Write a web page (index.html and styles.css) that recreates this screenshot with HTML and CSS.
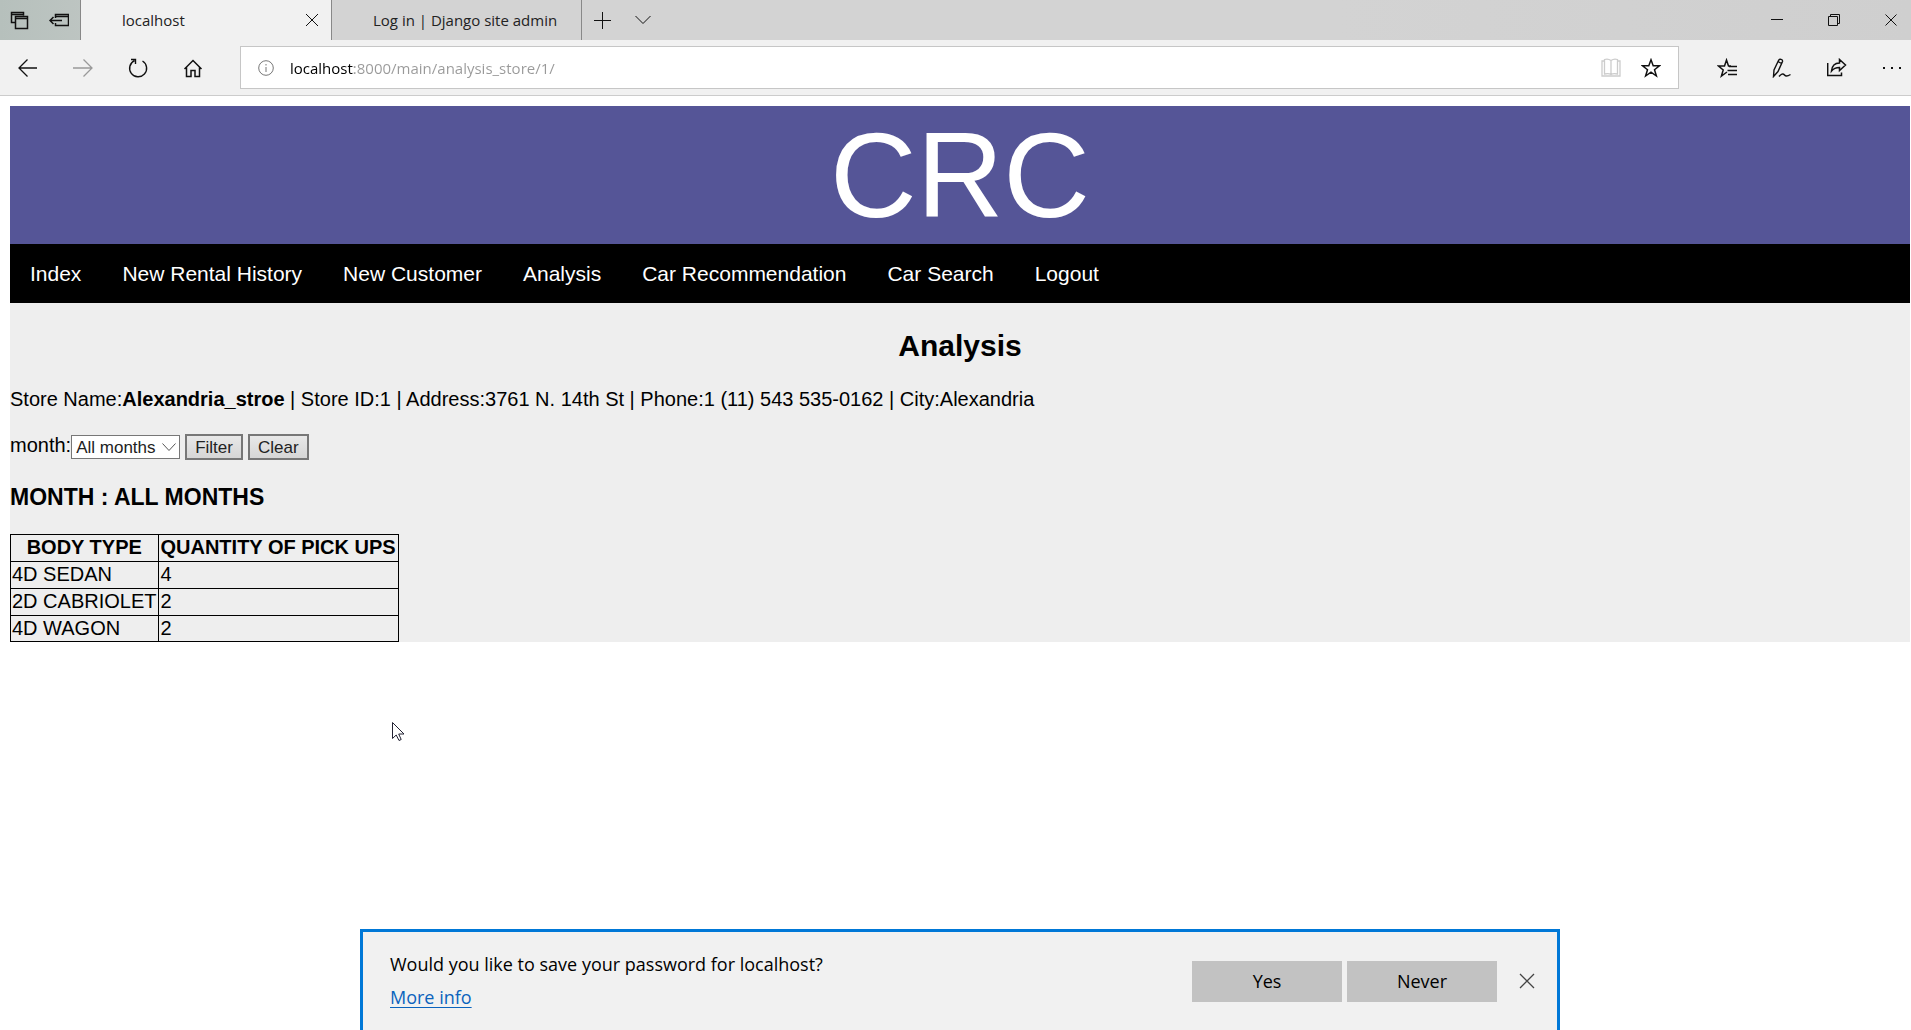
FILE: index.html
```html
<!DOCTYPE html>
<html lang="en">
<head>
<meta charset="utf-8">
<title>localhost</title>
<link rel="stylesheet" href="styles.css">
</head>
<body>
<div class="browser">
  <div class="tabstrip">
    <div class="tab-tools">
      <button class="icon-btn" aria-label="Tabs you've set aside"><svg width="20" height="20" viewBox="0 0 20 20"><path d="M5.500 12.500H2.500V2.500H14.500V5.500M2.500 4.500H14.500M6.500 6.500H18.500V18.500H6.500ZM6.500 8.500H18.500M5 12.500H6" stroke-width="1.500"/></svg></button>
      <button class="icon-btn" aria-label="Set these tabs aside"><svg width="20" height="20" viewBox="0 0 20 20"><path d="M6.500 8V4.500H19.500V15.500H6.500V13M6.500 6.500H19.500M1 10.500H13M4.500 7L1 10.500L4.500 14" stroke-width="1.500"/></svg></button>
    </div>
    <div class="tab tab-active"><span class="tab-title">localhost</span>
      <button class="icon-btn" aria-label="Close tab"><svg width="14" height="14" viewBox="0 0 14 14"><path d="M1 1L13 13M13 1L1 13"/></svg></button>
    </div>
    <div class="tab"><span class="tab-title">Log in | Django site admin</span></div>
    <div class="tab-actions">
      <button class="icon-btn" aria-label="New tab"><svg width="17" height="17" viewBox="0 0 17 17"><path d="M8.500 0V17M0 8.500H17"/></svg></button>
      <button class="icon-btn" aria-label="Tab previews"><svg width="16" height="10" viewBox="0 0 16 10"><path d="M.5 1L8 8.500L15.500 1"/></svg></button>
    </div>
    <div class="window-controls">
      <button class="icon-btn" aria-label="Minimize"><svg width="12" height="12" viewBox="0 0 12 12"><path d="M0 5.500H12"/></svg></button>
      <button class="icon-btn" aria-label="Restore"><svg width="12" height="12" viewBox="0 0 12 12"><path d="M.5 2.500H9.500V11.500H.5ZM2.500 2.500V.5H11.500V9.500H9.500"/></svg></button>
      <button class="icon-btn" aria-label="Close"><svg width="12" height="12" viewBox="0 0 12 12"><path d="M.5 .5L11.500 11.500M11.500 .5L.5 11.500"/></svg></button>
    </div>
  </div>
  <div class="toolbar">
    <div class="tools">
      <button class="icon-btn" aria-label="Back"><svg width="20" height="20" viewBox="0 0 20 20"><path d="M19 10H1M9.500 1.500L1 10L9.500 18.500" stroke-width="1.300"/></svg></button>
      <button class="icon-btn icon-off" aria-label="Forward"><svg width="20" height="20" viewBox="0 0 20 20"><path d="M0 10H18.500M10.500 1.500L19 10L10.500 18.500" stroke-width="1.300"/></svg></button>
      <button class="icon-btn" aria-label="Refresh"><svg width="20" height="20" viewBox="0 0 20 20"><path d="M14.500 3A8.500 8.500 0 1 1 6.500 2.600M3 1.500H7.500V6" stroke-width="1.400"/></svg></button>
      <button class="icon-btn" aria-label="Home"><svg width="20" height="20" viewBox="0 0 20 20"><path d="M1.500 11L10 2.500L18.500 11M3.500 9.500V18.500H8V12.500H12V18.500H16.500V9.500" stroke-width="1.500"/></svg></button>
    </div>
    <div class="address">
      <svg class="icon icon-grey" width="16" height="16" viewBox="0 0 16 16"><circle cx="8" cy="8" r="7.300"/><path d="M8 7V12M8 4V5.500"/></svg>
      <input class="address-input" type="text" aria-label="Address" value="localhost:8000/main/analysis_store/1/">
      <div class="address-tools">
        <button class="icon-btn icon-faint" aria-label="Reading view"><svg width="20" height="20" viewBox="0 0 20 20"><path d="M3 3H1V18H19V3H17M10 2.500C8 1 5 1 3.500 1.500V16C6 15.500 8.500 15.500 10 16.500C11.500 15.500 14 15.500 16.500 16V1.500C15 1 12 1 10 2.500V16" stroke-width="1.300"/></svg></button>
        <button class="icon-btn" aria-label="Add to favorites"><svg width="20" height="20" viewBox="0 0 20 20"><path d="M10 1.800L12.200 7.800H18.500L13.500 11.700L15.400 18L10 14.200L4.600 18L6.500 11.700L1.500 7.800H7.800Z" stroke-width="1.500"/></svg></button>
      </div>
    </div>
    <div class="tools">
      <button class="icon-btn" aria-label="Hub"><svg width="20" height="20" viewBox="0 0 20 20"><path d="M14 8H11.500L9.500 2L7.500 8H1.500L6.200 12L4.400 18L10 14M12 8.500H20M10.500 12.500H20M11 16.500H20" stroke-width="1.500"/></svg></button>
      <button class="icon-btn" aria-label="Add notes"><svg width="20" height="20" viewBox="0 0 20 20"><path d="M1.500 18.500L2 12L6.500 2.500C7.500 .5 11 1.200 10.500 3.500L6 13.500ZM6 3.500L9.500 5.500M7 18.500C9 16 11 15 12.500 17S15.500 18.500 18.500 16.500" stroke-width="1.400"/></svg></button>
      <button class="icon-btn" aria-label="Share"><svg width="20" height="20" viewBox="0 0 20 20"><path d="M.7 5V17.500H14.500V14.500M4.500 13C5 8 8 5 12.500 5V1.500L18.500 7L12.500 12.500V9.500C9 9.500 6.500 10.500 4.500 13Z" stroke-width="1.500"/></svg></button>
      <button class="icon-btn" aria-label="Settings and more"><svg width="20" height="20" viewBox="0 0 20 20"><path class="dots" d="M1 9h2v2h-2zM9 9h2v2h-2zM17 9h2v2h-2z"/></svg></button>
    </div>
  </div>
</div>

<div class="page">
  <header class="banner">CRC</header>
  <nav class="menu">
    <a href="#">Index</a>
    <a href="#">New Rental History</a>
    <a href="#">New Customer</a>
    <a href="#">Analysis</a>
    <a href="#">Car Recommendation</a>
    <a href="#">Car Search</a>
    <a href="#">Logout</a>
  </nav>
  <main class="content">
    <h2 class="title">Analysis</h2>
    <p class="store">Store Name:<b>Alexandria_stroe</b> | Store ID:1 | Address:3761 N. 14th St | Phone:1 (11) 543 535-0162 | City:Alexandria</p>
    <form class="filter">
      <label for="month">month:</label>
      <span class="select-box">
        <select id="month"><option>All months</option></select>
        <svg class="select-arrow" width="14" height="9" viewBox="0 0 14 9"><path d="M.5 .5L7 7.500L13.500 .5"/></svg>
      </span>
      <button class="form-btn" type="submit">Filter</button>
      <button class="form-btn" type="reset">Clear</button>
    </form>
    <h3 class="subtitle">MONTH : ALL MONTHS</h3>
    <table class="data">
      <thead><tr><th>BODY TYPE</th><th>QUANTITY OF PICK UPS</th></tr></thead>
      <tbody>
        <tr><td>4D SEDAN</td><td>4</td></tr>
        <tr><td>2D CABRIOLET</td><td>2</td></tr>
        <tr><td>4D WAGON</td><td>2</td></tr>
      </tbody>
    </table>
  </main>
</div>

<svg class="pointer" width="13" height="20" viewBox="0 0 13 20"><path d="M.5 .5V16.500L4.200 13L7 18.500L9.200 17.500L6.700 12H12Z"/></svg>

<div class="prompt-area">
  <div class="prompt" role="dialog" aria-label="Save password">
    <div class="prompt-text">
      <span>Would you like to save your password for localhost?</span>
      <a href="#">More info</a>
    </div>
    <div class="prompt-actions">
      <button class="prompt-btn">Yes</button>
      <button class="prompt-btn">Never</button>
    </div>
    <button class="icon-btn icon-dark" aria-label="Dismiss"><svg width="16" height="16" viewBox="0 0 16 16"><path d="M1 1L15 15M15 1L1 15" stroke-width="1.300"/></svg></button>
  </div>
</div>
</body>
</html>
```
FILE: styles.css
```css
* { box-sizing: border-box; }

body {
  margin: 0;
  background: #fff;
  color: #000;
  font: 20px/23px "Liberation Sans", Arial, sans-serif;
}

svg { display: block; fill: none; stroke: currentColor; }

/* Browser frame */
.browser {
  font-family: "Open Sans", "Noto Sans", sans-serif;
  background: #f1f1f1;
  border-bottom: 1px solid #ccc;
}
.icon-btn {
  flex: none;
  padding: 0;
  border: 0;
  background: none;
  color: #111;
}
.icon-off { color: #999; }
.icon-dark { color: #444; }
.icon-faint { color: #ccc; }
.icon-grey { color: #777; }
.dots { fill: currentColor; stroke: none; }

.tabstrip {
  display: flex;
  height: 40px;
  background: linear-gradient(90deg, #b6c0bc, #d3d3d3 332px, #d3d3d3 70%, #cfcfcf);
}
.tab-tools {
  display: flex;
  align-items: center;
  gap: 20px;
  padding: 0 11px 0 9px;
}
.tab {
  display: flex;
  align-items: center;
  justify-content: space-between;
  width: 250px;
  padding: 0 12px 0 41px;
  border-left: 1px solid #888;
  font-size: 15px;
  color: #222;
}
.tab-active { width: 251px; background: #f1f1f1; }
.tab-title { white-space: nowrap; }
.tab-actions {
  display: flex;
  align-items: center;
  gap: 24px;
  padding: 0 12px;
  border-left: 1px solid #888;
}
.window-controls {
  display: flex;
  align-items: center;
  gap: 45px;
  margin-left: auto;
  padding-right: 14px;
}

.toolbar {
  display: flex;
  align-items: center;
  height: 55px;
  padding: 0 9px 0 18px;
}
.tools { display: flex; gap: 35px; }
.address {
  display: flex;
  flex: 1;
  align-items: center;
  gap: 16px;
  height: 43px;
  margin: 0 38px 0 37px;
  padding: 0 17px;
  border: 1px solid #c6c6c6;
  background: #fff;
}
.icon { flex: none; }
.address-input {
  flex: 1;
  min-width: 0;
  padding: 0;
  border: 0;
  outline: 0;
  font: 15px/24px "Open Sans", "Noto Sans", sans-serif;
  color: transparent;
  background: linear-gradient(90deg, #000 64px, #999 64px);
  -webkit-background-clip: text;
  background-clip: text;
}
.address-tools { display: flex; gap: 20px; }

/* Site */
.page { margin: 10px 1px 0 10px; }
.banner {
  background: #555597;
  color: #fff;
  font-size: 120px;
  line-height: 138px;
  text-align: center;
}
.menu {
  display: flex;
  gap: 1px;
  background: #000;
}
.menu a {
  padding: 18px 20px;
  color: #fff;
  font-size: 21px;
  text-decoration: none;
}
.content {
  padding-top: 25px;
  background: #eee;
}
.title {
  margin: 0 0 25px;
  font-size: 30px;
  line-height: 35px;
  text-align: center;
}
.store { margin: 0 0 23px; }
.filter {
  display: flex;
  align-items: center;
  gap: 5px;
  height: 26px;
}
.filter label {
  align-self: flex-start;
  margin-right: -5px;
}
.select-box { position: relative; }
.select-box select {
  display: block;
  width: 109px;
  height: 24px;
  padding: 1px 4px 0;
  border: 1px solid #777;
  border-radius: 0;
  appearance: none;
  background: #fff;
  color: #222;
  font: 17px/21px "Liberation Sans", Arial, sans-serif;
}
.select-arrow {
  position: absolute;
  top: 8px;
  right: 4px;
  color: #555;
  pointer-events: none;
}
.form-btn {
  height: 26px;
  padding: 1px 8px 0;
  border: 2px solid #777;
  background: linear-gradient(#e8e8e8, #d6d6d6);
  color: #222;
  font: 17px/21px "Liberation Sans", Arial, sans-serif;
}
.subtitle {
  margin: 23px 0;
  font-size: 23px;
  line-height: 28px;
}
.data { border-collapse: collapse; }
.data th,
.data td {
  padding: 1px 2px 2px 1px;
  border: 1px solid #000;
}
.data tr:last-child td { padding-bottom: 1px; }

.pointer {
  position: absolute;
  top: 722px;
  left: 392px;
  color: #223;
  fill: #fff;
}

/* Save-password prompt */
.prompt-area {
  position: fixed;
  right: 1px;
  bottom: 0;
  left: 10px;
  display: flex;
  justify-content: center;
  font: 18px/33px "Open Sans", "Noto Sans", sans-serif;
}
.prompt {
  display: flex;
  align-items: center;
  width: 1200px;
  padding: 16px 22px 16px 27px;
  border: 3px solid #0078d7;
  border-bottom: 0;
  background: #f1f1f1;
}
.prompt-text {
  display: flex;
  flex: 1;
  flex-direction: column;
  align-items: flex-start;
}
.prompt-text a { color: #0b63bd; text-underline-offset: 3px; }
.prompt-actions { display: flex; gap: 5px; margin-right: 22px; }
.prompt-btn {
  width: 150px;
  height: 41px;
  padding: 0;
  border: 0;
  background: #c2c2c2;
  color: #000;
  font: inherit;
}
```
